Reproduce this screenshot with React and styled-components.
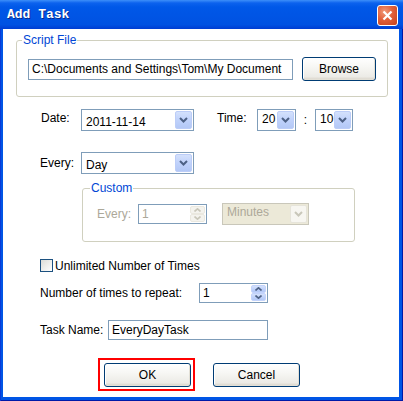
import React from 'react'
import styled, { createGlobalStyle } from 'styled-components'

const GlobalStyle = createGlobalStyle`
  html, body {
    margin: 0;
    padding: 0;
    background: #0055e5;
  }
  body {
    font-family: "Liberation Sans", Arial, sans-serif;
    font-size: 12px;
    color: #000;
  }
`

const Window = styled.div`
  width: 403px;
  height: 401px;
  display: flex;
  flex-direction: column;
  overflow: hidden;
`

const TitleBar = styled.div`
  height: 29px;
  flex-shrink: 0;
  display: flex;
  align-items: flex-start;
  justify-content: space-between;
  background: linear-gradient(#3d8ff9 0, #0c62ee 3px, #0058e8 7px, #0055e5 50%, #0052e2 85%, #003dd2 100%);
`

const Title = styled.span`
  margin: 7px 0 0 7px;
  font-family: "Liberation Mono", "DejaVu Sans Mono", monospace;
  font-weight: 700;
  font-size: 13px;
  line-height: 16px;
  color: #fff;
  text-shadow: 1px 1px #0a2a8a;
`

const CloseButton = styled.div`
  width: 21px;
  height: 21px;
  box-sizing: border-box;
  margin: 5px 5px 0 0;
  border: 1px solid #fff;
  border-radius: 3px;
  background: radial-gradient(circle at 35% 30%, #f09a7a 0, #e2603a 45%, #c4401b 100%);
  display: flex;
  align-items: center;
  justify-content: center;
`

const Frame = styled.div`
  flex: 1;
  display: flex;
  padding: 0 4px 4px 3px;
  background: #0055e5;
  box-shadow: inset 1px 0 #0a3ad8, inset -1px 0 #0019a8, inset 0 -1px #0019a8;
`

const Client = styled.div`
  flex: 1;
  background: #fff;
  display: flex;
  flex-direction: column;
  align-items: flex-start;
`

const Group = styled.div`
  position: relative;
  box-sizing: border-box;
  width: ${p => p.$w}px;
  height: ${p => p.$h}px;
  margin: ${p => p.$top}px 0 0 ${p => p.$left}px;
  padding: ${p => p.$pad};
  border: 1px solid #d0d0bf;
  border-radius: 3px;
  display: flex;
  align-items: flex-start;
`

const Legend = styled.span`
  position: absolute;
  top: -8px;
  left: ${p => p.$x}px;
  padding: 0 1px;
  background: #fff;
  color: #0046d5;
  line-height: 15px;
`

const Row = styled.div`
  display: flex;
  align-items: ${p => p.$align || 'center'};
  margin: ${p => p.$top}px 0 0 ${p => p.$left}px;
`

const Label = styled.span`
  width: ${p => p.$w}px;
  flex-shrink: 0;
  line-height: 14px;
  white-space: nowrap;
  margin-top: ${p => p.$shift || 0}px;
  margin-left: ${p => p.$left || 0}px;
  color: ${p => (p.$disabled ? '#aca899' : '#000')};
`

const TextBox = styled.div`
  box-sizing: border-box;
  width: ${p => p.$w}px;
  height: ${p => p.$h}px;
  flex-shrink: 0;
  border: 1px solid #7f9db9;
  background: #fff;
  display: flex;
  align-items: center;
  white-space: nowrap;
  overflow: hidden;
  color: ${p => (p.$disabled ? '#aca899' : '#000')};
`

const BoxText = styled.span`
  flex: 1;
  padding-left: 3px;
  padding-top: ${p => p.$pad || 0}px;
  line-height: 14px;
  overflow: hidden;
`

const Combo = styled.div`
  box-sizing: border-box;
  width: ${p => p.$w}px;
  height: ${p => p.$h}px;
  flex-shrink: 0;
  border: 1px solid ${p => (p.$disabled ? '#c9c7ba' : '#7f9db9')};
  background: ${p => (p.$disabled ? '#ece9d8' : '#fff')};
  display: flex;
  align-items: stretch;
  padding: 1px;
  color: ${p => (p.$disabled ? '#aca899' : '#000')};
`

const DropButton = styled.div`
  width: 17px;
  flex-shrink: 0;
  border-radius: 2px;
  box-sizing: border-box;
  display: flex;
  align-items: center;
  justify-content: center;
  background: ${p =>
    p.$disabled
      ? '#f7f6f1'
      : 'linear-gradient(#d4e1fc, #c0d2fb 50%, #b3c8f6)'};
  border: 1px solid ${p => (p.$disabled ? '#e6e4da' : '#bccdf8')};
`

const Spin = styled.div`
  width: 15px;
  flex-shrink: 0;
  align-self: stretch;
  margin: 1px 1px 1px 0;
  display: flex;
  flex-direction: column;
`

const SpinHalf = styled.div`
  flex: 1;
  border-radius: 2px;
  display: flex;
  align-items: center;
  justify-content: center;
  background: ${p =>
    p.$disabled ? '#f4f3ee' : 'linear-gradient(#d4e1fc, #bdd0fa 60%, #b3c8f6)'};
  border: 1px solid ${p => (p.$disabled ? '#eae8df' : '#c3d3fb')};
`

const Check = styled.div`
  width: 13px;
  height: 13px;
  box-sizing: border-box;
  border: 1px solid #1c5180;
  background: linear-gradient(135deg, #dcdcd7, #fff);
  margin-right: 2px;
`

const Highlight = styled.div`
  border: 2px solid #f00;
  padding: 3px 2px 2px 4px;
  display: flex;
`

const Button = styled.button`
  width: ${p => p.$w || 87}px;
  height: 24px;
  flex-shrink: 0;
  box-sizing: border-box;
  margin: 0 0 0 ${p => p.$left || 0}px;
  padding: 0;
  border: 1px solid #003c74;
  border-radius: 3px;
  background: linear-gradient(#fff 0, #f7f7f4 40%, #ecebe6 85%, #d6d0c5 100%);
  box-shadow: inset -1px -1px #e3e0d6, inset 1px 1px #fff;
  font-family: "Liberation Sans", Arial, sans-serif;
  font-size: 12px;
  color: #000;
`

const Colon = styled.span`
  width: 19px;
  margin-top: 4px;
  text-align: center;
  line-height: 14px;
`

const Gap = styled.span`
  width: ${p => p.$w}px;
  flex-shrink: 0;
`

const Chevron = ({ color = '#4d6185' }) => (
  <svg width="9" height="6" viewBox="0 0 9 6">
    <polyline points="1,1 4.5,4.5 8,1" fill="none" stroke={color} strokeWidth="2" />
  </svg>
)

const SpinArrow = ({ up, color = '#4d6185' }) => (
  <svg width="7" height="4" viewBox="0 0 7 4">
    <polyline
      points={up ? '0.5,3.5 3.5,0.8 6.5,3.5' : '0.5,0.5 3.5,3.2 6.5,0.5'}
      fill="none"
      stroke={color}
      strokeWidth="1.6"
    />
  </svg>
)

const Select = ({ w, h = 22, value, pad, disabled }) => (
  <Combo $w={w} $h={h} $disabled={disabled}>
    <BoxText $pad={pad}>{value}</BoxText>
    <DropButton $disabled={disabled}>
      <Chevron color={disabled ? '#c9c7ba' : '#4d6185'} />
    </DropButton>
  </Combo>
)

const SpinBox = ({ w, value, disabled }) => (
  <TextBox $w={w} $h={20} $disabled={disabled}>
    <BoxText>{value}</BoxText>
    <Spin>
      <SpinHalf $disabled={disabled}>
        <SpinArrow up color={disabled ? '#c9c7ba' : '#4d6185'} />
      </SpinHalf>
      <SpinHalf $disabled={disabled}>
        <SpinArrow color={disabled ? '#c9c7ba' : '#4d6185'} />
      </SpinHalf>
    </Spin>
  </TextBox>
)

export default function App() {
  return (
    <>
      <GlobalStyle />
      <Window>
        <TitleBar>
          <Title>Add Task</Title>
          <CloseButton>
            <svg width="11" height="11" viewBox="0 0 11 11">
              <path d="M1.5 1.5 L9.5 9.5 M9.5 1.5 L1.5 9.5" stroke="#fff" strokeWidth="2.2" />
            </svg>
          </CloseButton>
        </TitleBar>
        <Frame>
          <Client>
            <Group $w={372} $h={57} $top={11} $left={13} $pad="16px 0 0 11px">
              <Legend $x={5}>Script File</Legend>
              <Row $top={0} $left={0}>
                <TextBox $w={265} $h={21}>
                  <BoxText>C:\Documents and Settings\Tom\My Document</BoxText>
                </TextBox>
                <Button $w={74} $left={9}>Browse</Button>
              </Row>
            </Group>

            <Row $top={12} $left={38} $align="flex-start">
              <Label $w={40} $shift={2}>Date:</Label>
              <Select w={113} value="2011-11-14" pad={4} />
              <Label $w={40} $shift={2} $left={23}>Time:</Label>
              <Select w={39} value="20" pad={1} />
              <Colon>:</Colon>
              <Select w={38} value="10" pad={1} />
            </Row>

            <Row $top={21} $left={37} $align="flex-start">
              <Label $w={41} $shift={4}>Every:</Label>
              <Select w={113} value="Day" pad={4} />
            </Row>

            <Group $w={273} $h={54} $top={14} $left={79} $pad="14px 0 0 14px">
              <Legend $x={7}>Custom</Legend>
              <Row $top={0} $left={0}>
                <Label $w={41} $disabled>Every:</Label>
                <SpinBox w={69} value="1" disabled />
                <Gap $w={15} />
                <Select w={87} value="Minutes" disabled />
              </Row>
            </Group>

            <Row $top={17} $left={37} $align="flex-start">
              <Check />
              <Label $w={160}>Unlimited Number of Times</Label>
            </Row>

            <Row $top={10} $left={37}>
              <Label $w={159}>Number of times to repeat:</Label>
              <SpinBox w={69} value="1" />
            </Row>

            <Row $top={17} $left={37}>
              <Label $w={68}>Task Name:</Label>
              <TextBox $w={160} $h={20}>
                <BoxText>EveryDayTask</BoxText>
              </TextBox>
            </Row>

            <Row $top={18} $left={95}>
              <Highlight>
                <Button>OK</Button>
              </Highlight>
              <Button $left={18}>Cancel</Button>
            </Row>
          </Client>
        </Frame>
      </Window>
    </>
  )
}
